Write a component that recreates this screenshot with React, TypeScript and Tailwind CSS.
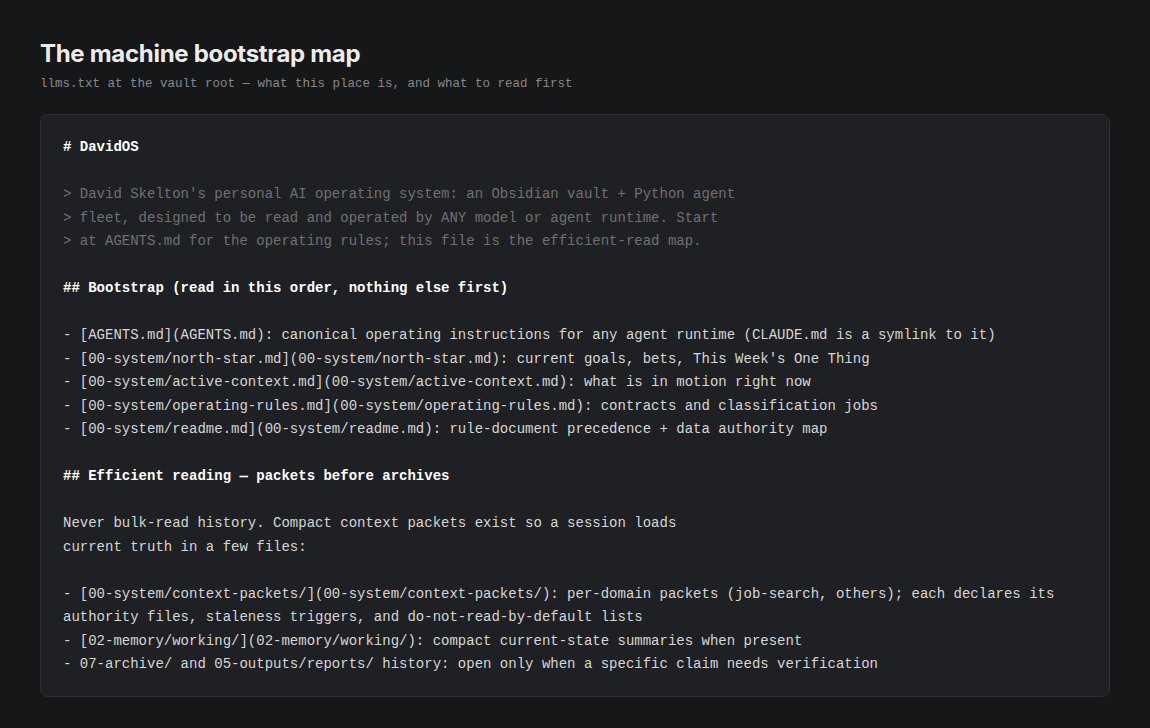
import React from 'react';

type Line = { text: string; kind?: 'h' | 'q' | 'p' };

const lines: Line[] = [
  { text: '# DavidOS', kind: 'h' },
  { text: '' },
  { text: "> David Skelton's personal AI operating system: an Obsidian vault + Python agent", kind: 'q' },
  { text: '> fleet, designed to be read and operated by ANY model or agent runtime. Start', kind: 'q' },
  { text: '> at AGENTS.md for the operating rules; this file is the efficient-read map.', kind: 'q' },
  { text: '' },
  { text: '## Bootstrap (read in this order, nothing else first)', kind: 'h' },
  { text: '' },
  { text: '- [AGENTS.md](AGENTS.md): canonical operating instructions for any agent runtime (CLAUDE.md is a symlink to it)' },
  { text: "- [00-system/north-star.md](00-system/north-star.md): current goals, bets, This Week's One Thing" },
  { text: '- [00-system/active-context.md](00-system/active-context.md): what is in motion right now' },
  { text: '- [00-system/operating-rules.md](00-system/operating-rules.md): contracts and classification jobs' },
  { text: '- [00-system/readme.md](00-system/readme.md): rule-document precedence + data authority map' },
  { text: '' },
  { text: '## Efficient reading — packets before archives', kind: 'h' },
  { text: '' },
  { text: 'Never bulk-read history. Compact context packets exist so a session loads' },
  { text: 'current truth in a few files:' },
  { text: '' },
  { text: '- [00-system/context-packets/](00-system/context-packets/): per-domain packets (job-search, others); each declares its authority files, staleness triggers, and do-not-read-by-default lists' },
  { text: '- [02-memory/working/](02-memory/working/): compact current-state summaries when present' },
  { text: '- 07-archive/ and 05-outputs/reports/ history: open only when a specific claim needs verification' },
];

function CodeLine({ line }: { line: Line }) {
  if (line.text === '') return <div className="h-[23.5px]" />;
  const cls =
    line.kind === 'h'
      ? 'font-bold text-white'
      : line.kind === 'q'
      ? 'text-[#6f7073]'
      : 'text-[#d6d6d6]';
  return <div className={`whitespace-pre-wrap break-words ${cls}`}>{line.text}</div>;
}

export default function App() {
  return (
    <div className="min-h-[728px] w-full bg-[#161719] px-10 pt-[38px] pb-8">
      <h1 className="font-['Inter','Liberation_Sans',sans-serif] text-[24px] font-bold leading-8 tracking-[-0.3px] text-[#ececec]">
        The machine bootstrap map
      </h1>
      <p className="mt-[5px] font-['Liberation_Mono',monospace] text-[12.5px] leading-[18px] text-[#86878a]">
        llms.txt at the vault root — what this place is, and what to read first
      </p>
      <div className="mt-[21px] rounded-lg border border-[#2c2d31] bg-[#1f2023] px-[22px] pt-[21px] pb-[19px]">
        <div className="font-['Liberation_Mono',monospace] text-[14px] leading-[23.5px]">
          {lines.map((l, i) => (
            <CodeLine key={i} line={l} />
          ))}
        </div>
      </div>
    </div>
  );
}
